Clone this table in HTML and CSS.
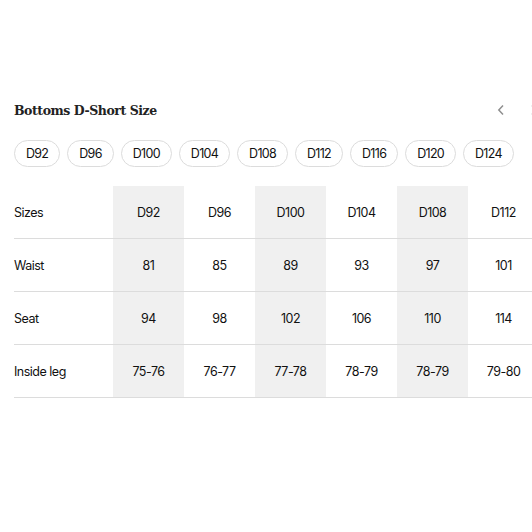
FILE: index.html
```html
<!DOCTYPE html>
<html>
<head>
<meta charset="utf-8">
<link rel="stylesheet" href="styles.css">
</head>
<body>
<div class="panel">
  <div class="head">
    <h2 class="title">Bottoms D-Short Size</h2>
    <div class="arrows">
      <button class="arrow"><svg width="8" height="12" viewBox="0 0 8 12"><path d="M6 1.5 L1.8 6 L6 10.5" fill="none" stroke="#8f8f8f" stroke-width="1.5"/></svg></button>
      <button class="arrow"><svg width="8" height="12" viewBox="0 0 8 12"><path d="M2 1.5 L6.2 6 L2 10.5" fill="none" stroke="#8f8f8f" stroke-width="1.5"/></svg></button>
    </div>
  </div>
  <div class="pills">
    <span class="pill">D92</span>
    <span class="pill">D96</span>
    <span class="pill">D100</span>
    <span class="pill">D104</span>
    <span class="pill">D108</span>
    <span class="pill">D112</span>
    <span class="pill">D116</span>
    <span class="pill">D120</span>
    <span class="pill">D124</span>
  </div>
  <table class="sizes">
    <colgroup>
      <col class="c-label"><col class="c-val"><col class="c-val"><col class="c-val"><col class="c-val"><col class="c-val"><col class="c-val">
    </colgroup>
    <tr>
      <th class="label">Sizes</th>
      <td class="shade">D92</td><td>D96</td><td class="shade">D100</td><td>D104</td><td class="shade">D108</td><td>D112</td>
    </tr>
    <tr>
      <th class="label">Waist</th>
      <td class="shade">81</td><td>85</td><td class="shade">89</td><td>93</td><td class="shade">97</td><td>101</td>
    </tr>
    <tr>
      <th class="label">Seat</th>
      <td class="shade">94</td><td>98</td><td class="shade">102</td><td>106</td><td class="shade">110</td><td>114</td>
    </tr>
    <tr>
      <th class="label">Inside leg</th>
      <td class="shade">75-76</td><td>76-77</td><td class="shade">77-78</td><td>78-79</td><td class="shade">78-79</td><td>79-80</td>
    </tr>
  </table>
</div>
</body>
</html>
```

FILE: styles.css
```css
html, body {
  margin: 0;
  padding: 0;
  background: #fff;
  overflow: hidden;
}
body {
  width: 532px;
  height: 532px;
  font-family: Inter, "Liberation Sans", sans-serif;
  color: #1a1a1a;
}
.panel {
  width: 530px;
  padding: 99px 0 0 14px;
}
.head {
  display: flex;
  justify-content: space-between;
  align-items: center;
  height: 22px;
}
.title {
  margin: 0;
  font-family: "DejaVu Serif", serif;
  font-weight: bold;
  font-size: 12.5px;
  letter-spacing: -0.45px;
  color: #222;
}
.arrows {
  display: flex;
  gap: 13px;
}
.arrow {
  width: 20px;
  height: 20px;
  padding: 0;
  border: 0;
  background: none;
  display: flex;
  align-items: center;
  justify-content: center;
}
.pills {
  display: flex;
  gap: 7px;
  margin-top: 19px;
}
.pill {
  box-sizing: border-box;
  height: 27px;
  padding: 0 11px;
  border: 1px solid #dcdcdc;
  border-radius: 14px;
  display: flex;
  align-items: center;
  font-size: 12.5px;
  letter-spacing: -0.7px;
  color: #111;
}
.sizes {
  margin-top: 19px;
  border-collapse: collapse;
  table-layout: fixed;
  width: 525px;
  font-size: 12.5px;
  letter-spacing: -0.5px;
  color: #111;
}
.c-label { width: 99px; }
.c-val { width: 71px; }
.sizes tr {
  border-bottom: 1px solid #dcdcdc;
}
.sizes th, .sizes td {
  height: 52px;
  padding: 0;
  font-weight: normal;
  white-space: nowrap;
}
.sizes th.label {
  text-align: left;
}
.sizes td {
  text-align: center;
}
.sizes td.shade {
  background: #f0f0f0;
}
```
